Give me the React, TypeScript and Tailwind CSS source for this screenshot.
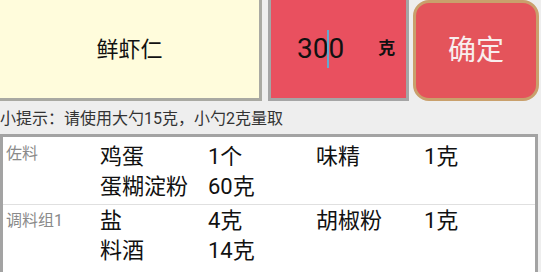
const font = { fontFamily: 'Roboto, "Noto Sans CJK SC", sans-serif' };

type Row = {
  label: string;
  items: string[][];
  pt: string;
  labelMt: string;
};

const rows: Row[] = [
  {
    label: '佐料',
    items: [
      ['鸡蛋', '1个', '味精', '1克'],
      ['蛋糊淀粉', '60克', '', ''],
    ],
    pt: 'pt-[5px] pb-[2px] border-b border-[#e0e0e0]',
    labelMt: 'mt-[1px]',
  },
  {
    label: '调料组1',
    items: [
      ['盐', '4克', '胡椒粉', '1克'],
      ['料酒', '14克', '', ''],
    ],
    pt: 'pt-[1px]',
    labelMt: 'mt-[4px]',
  },
];

function IngredientRow({ row }: { row: Row }) {
  return (
    <div className={`flex ${row.pt}`}>
      <div className={`w-[97px] shrink-0 pl-[3px] text-[16px] leading-[22px] text-[#8a8a8a] ${row.labelMt}`}>
        {row.label}
      </div>
      <div className="grid grid-cols-[108px_108px_108px_108px] text-[22px] leading-[30px] text-[#111]">
        {row.items.flat().map((cell, i) => (
          <div key={i} className="whitespace-nowrap">
            {cell}
          </div>
        ))}
      </div>
    </div>
  );
}

export default function App() {
  return (
    <div className="h-[272px] w-[541px] overflow-hidden bg-[#eeeeee]" style={font}>
      <div className="flex h-[101px]">
        <div className="flex w-[262px] items-center justify-center border-b-[3px] border-r-[3px] border-[#a9a9a2] bg-[#fffcdc] text-[22px] text-[#111]">
          鲜虾仁
        </div>
        <div className="ml-[6px] flex w-[141px] items-center border-x-[3px] border-b-[3px] border-[#a5a5a5] bg-[#e9505f] pl-[26px]">
          <div className="flex items-center text-[28px] leading-none text-[#111]">
            <span>30</span>
            <span className="-mx-[1px] h-[38px] w-[2px] bg-[#62a9cf]" />
            <span>0</span>
          </div>
          <span className="ml-[34px] text-[17px] font-bold text-[#111]">克</span>
        </div>
        <div className="ml-[4px] flex w-[126px] items-center justify-center rounded-[16px] border-[3px] border-[#c9a06c] bg-[#e4545b] text-[28px] text-[#f8eeee]">
          确定
        </div>
      </div>

      <div className="flex h-[33px] items-center pt-[2px] text-[16px] text-[#333]">
        小提示：请使用大勺15克，小勺2克量取
      </div>

      <div className="h-[138px] w-[538px] border-x-[3px] border-t-[3px] border-[#a3a3a3] bg-white">
        {rows.map((row) => (
          <IngredientRow key={row.label} row={row} />
        ))}
      </div>
    </div>
  );
}
